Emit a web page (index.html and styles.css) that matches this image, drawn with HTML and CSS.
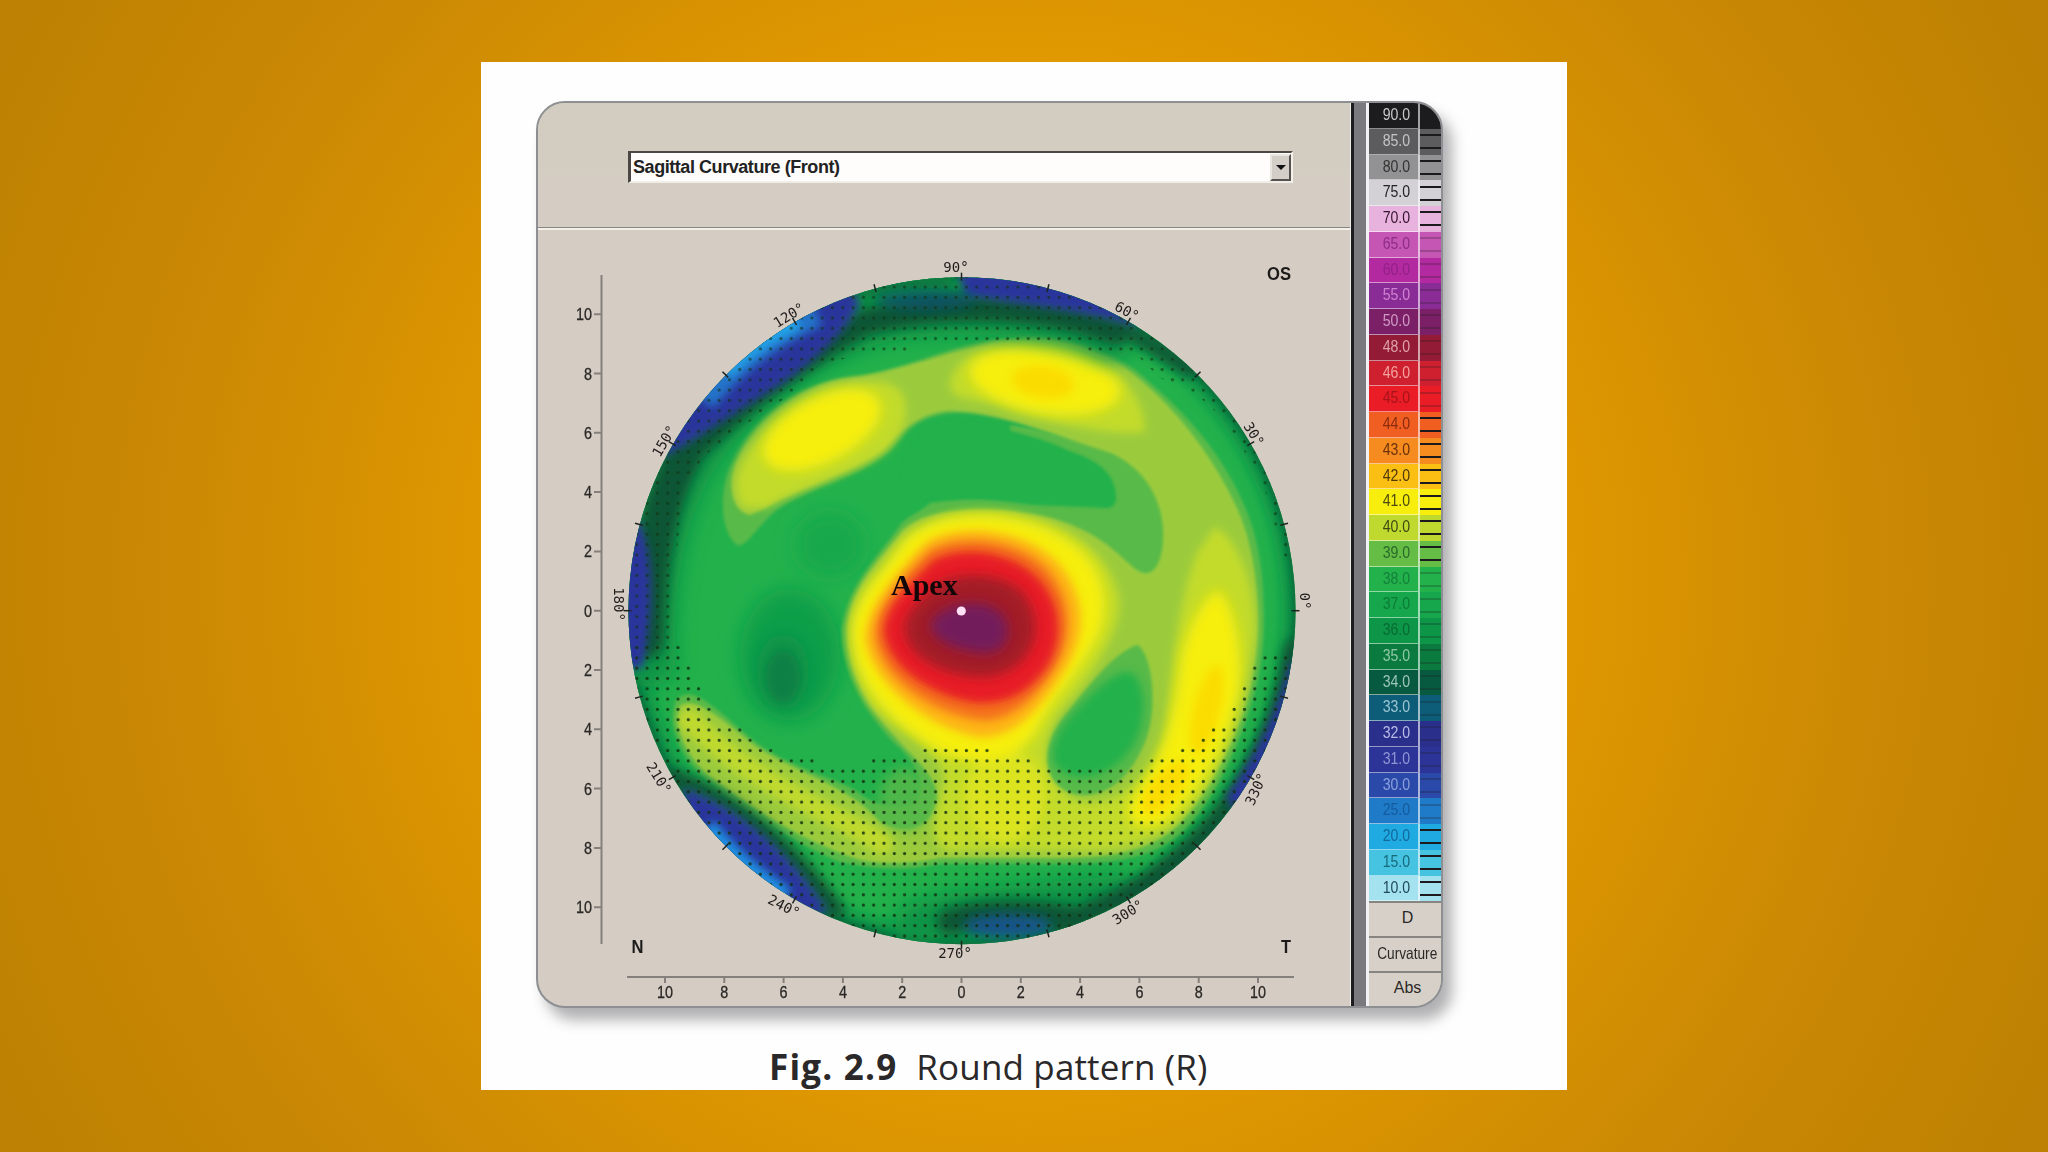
FILE: index.html
```html
<!DOCTYPE html>
<html lang="en">
<head>
  <meta charset="utf-8">
  <title>Fig. 2.9 Round pattern (R)</title>
  <link rel="stylesheet" href="styles.css">
</head>
<body>
  <figure class="figure">
    <div class="panel">
      <div class="main">
        <div class="toolbar">
          <div class="combo">
            <span class="combo-text">Sagittal Curvature (Front)</span>
            <span class="combo-btn"><i class="arrow"></i></span>
          </div>
        </div>
        <svg class="map" viewBox="538 230 812 776" width="812" height="776">
          <defs>
            <clipPath id="eye"><circle cx="962" cy="610.7" r="333.5"/></clipPath>
            <filter id="b1" x="-20%" y="-20%" width="140%" height="140%"><feGaussianBlur stdDeviation="1.5"/></filter>
            <filter id="b4" x="-30%" y="-30%" width="160%" height="160%"><feGaussianBlur stdDeviation="4"/></filter>
            <filter id="b6" x="-40%" y="-40%" width="180%" height="180%"><feGaussianBlur stdDeviation="6"/></filter>
            <filter id="b10" x="-60%" y="-60%" width="220%" height="220%"><feGaussianBlur stdDeviation="10"/></filter>
            <pattern id="grid" patternUnits="userSpaceOnUse" x="683.15" y="724.85" width="10.3" height="10.3">
              <circle cx="5.15" cy="5.15" r="1.6" fill="#12300f"/>
            </pattern>
          </defs>

          <g clip-path="url(#eye)">
            <rect x="620" y="270" width="690" height="690" fill="#23b14c"/>

            <!-- cool spots -->
            <ellipse cx="790" cy="655" rx="50" ry="66" fill="#0c9f4a" filter="url(#b10)"/>
            <ellipse cx="830" cy="545" rx="34" ry="32" fill="#18a84b" filter="url(#b10)"/>
            <ellipse cx="783" cy="672" rx="26" ry="38" fill="#0b9047" filter="url(#b10)"/>
            <ellipse cx="783" cy="677" rx="17" ry="26" fill="#0b8145" filter="url(#b4)"/>

            <!-- 39 D -->
            <path class="l39" filter="url(#b1)" d="M737 545C718 530 720 485 732 462C750 420 790 385 850 376C900 372 950 345 1000 338C1060 332 1110 345 1147 380C1200 425 1232 470 1250 520C1268 570 1268 650 1254 695C1240 745 1215 800 1183 832C1150 862 1100 864 1060 864L940 864C900 872 870 868 840 862C800 846 750 815 707 780C680 757 668 730 675 702C690 680 715 708 753 740C790 768 830 776 855 790C880 812 920 812 920 790C922 770 905 752 893 742C865 712 840 670 842 627C850 580 880 555 900 525C925 495 1010 503 1050 515C1095 528 1110 545 1133 567C1148 580 1158 572 1162 550C1168 510 1150 470 1110 453C1060 435 1000 414 957 413C915 415 905 435 890 450C860 478 800 490 773 513C755 530 745 548 737 545Z"/>
            <path class="l39" filter="url(#b1)" d="M1010 425C1050 430 1100 445 1130 462C1165 490 1168 530 1162 560C1155 580 1145 582 1133 570C1105 545 1080 525 1040 518L905 524L930 503C980 496 1020 500 1080 500L1010 480Z"/>
            <path class="l395" filter="url(#b1)" d="M750 515C728 510 728 475 738 458C760 410 810 382 850 378C900 372 950 350 1000 341C1060 335 1100 345 1137 377C1180 412 1215 460 1238 510C1262 565 1262 640 1250 690C1236 745 1205 795 1178 825C1150 850 1120 857 1060 858L940 858C920 862 890 866 860 860C800 840 750 808 707 774C684 752 674 730 680 706C695 694 725 722 757 747C800 775 850 786 880 822C905 835 930 830 938 800C938 775 905 750 896 738C868 708 845 670 847 627C852 585 880 560 903 530C930 505 1000 506 1050 518C1095 530 1110 547 1133 567C1148 580 1158 572 1162 550C1168 510 1150 470 1110 453C1060 437 1000 412 957 411C920 408 895 438 880 452C840 478 790 492 765 508Z"/>

            <!-- 40 D -->
            <g class="l40" filter="url(#b4)">
              <path d="M745 508C730 492 735 465 758 437C783 398 835 380 882 382C918 388 908 430 887 450C860 472 800 487 767 507Z"/>
              <path d="M950 384C955 350 1000 342 1050 343C1100 346 1147 390 1145 432C1110 436 1040 422 995 404C970 399 950 400 950 384Z"/>
              <path d="M1215 527C1240 540 1256 590 1255 633C1250 690 1225 750 1208 785C1180 825 1150 848 1090 850L950 850C925 845 935 810 945 780C940 745 890 730 870 702C845 660 845 600 880 570C905 525 945 507 1000 512C1070 518 1118 560 1120 605C1118 640 1085 685 1060 712C1040 745 1040 780 1075 800C1120 812 1155 770 1165 733C1170 690 1175 610 1197 553Z"/>
              <path d="M690 720C744 778 824 808 882 843" fill="none" stroke="#bfd92e" stroke-width="22" stroke-linecap="round"/>
            </g>
            <!-- 41 / 42 D -->
            <g class="l41" filter="url(#b6)">
              <ellipse cx="822" cy="430" rx="64" ry="32" transform="rotate(-27 822 430)"/>
              <ellipse cx="1045" cy="382" rx="76" ry="31" transform="rotate(9 1045 382)"/>
              <path d="M1219 590C1236 610 1242 650 1240 683C1232 740 1205 785 1167 820C1140 835 1120 820 1132 800C1160 765 1175 720 1181 660C1188 625 1205 595 1219 590Z"/>
              <path d="M903 543C935 506 1020 510 1064 538C1103 560 1111 600 1100 632C1082 672 1052 697 1037 730C1018 765 963 770 928 744C888 720 852 680 852 630C855 595 882 575 903 543Z"/>
              <ellipse cx="1005" cy="795" rx="40" ry="46" opacity=".5"/>
            </g>
            <g class="l42" filter="url(#b4)">
              <ellipse cx="1043" cy="382" rx="31" ry="16" transform="rotate(8 1043 382)"/>
              <ellipse cx="1207" cy="710" rx="13" ry="45" transform="rotate(14 1207 710)"/>
              <ellipse cx="1165" cy="788" rx="14" ry="32" transform="rotate(40 1165 788)"/>
            </g>

            <!-- troughs between the ring and the cone -->
            <path class="l38" filter="url(#b1)" d="M905 455C920 435 935 422 957 422C985 422 1050 440 1067 450C1085 456 1105 465 1112 480C1118 495 1118 507 1108 508L1033 505C990 499 940 494 915 500L900 490Z"/>
            <path class="l39" filter="url(#b1)" d="M1138 645C1155 660 1157 715 1145 742C1130 780 1105 797 1080 795C1045 790 1038 755 1060 722C1085 690 1115 650 1138 645Z"/>
            <path class="l38" filter="url(#b4)" d="M1130 672C1148 682 1146 720 1135 742C1118 772 1090 782 1068 775C1046 765 1050 745 1066 722C1085 700 1112 670 1130 672Z"/>
            <ellipse class="l39" cx="905" cy="800" rx="26" ry="32" opacity=".8" filter="url(#b6)"/>

            <!-- hot centre, 43 D and up -->
            <path fill="#fdb414" filter="url(#b4)" d="M925 543C960 520 1030 530 1060 565C1085 595 1088 635 1065 670C1040 710 1015 738 980 737C935 730 875 690 865 640C865 605 900 570 925 543Z"/>
            <path fill="#f4711f" filter="url(#b4)" d="M930 550C965 532 1020 540 1048 570C1072 600 1074 635 1055 668C1035 700 1010 722 980 720C935 714 880 680 875 635C875 605 905 575 930 550Z"/>
            <path fill="#e71d25" filter="url(#b4)" d="M932 561C965 543 1015 553 1038 578C1062 603 1064 640 1047 667C1027 695 1005 704 977 703C935 698 888 668 884 632C884 605 910 585 932 561Z"/>
            <path fill="#a21c28" filter="url(#b6)" d="M940 583C965 570 1005 575 1022 592C1040 615 1038 640 1025 657C1005 680 980 680 950 672C920 662 903 645 905 625C908 608 925 595 940 583Z"/>
            <path fill="#731d5c" filter="url(#b6)" d="M932 620C945 603 985 595 1003 615C1014 635 1005 653 985 653C960 652 925 640 932 620Z"/>

            <!-- dark rim -->
            <circle cx="962" cy="610.7" r="335" fill="none" stroke="#0f9548" stroke-width="30" filter="url(#b6)"/>
            <circle cx="962" cy="610.7" r="336" fill="none" stroke="#0a5a36" stroke-width="9" filter="url(#b4)"/>
            <g fill="none" stroke="#0f9347" stroke-linecap="round" filter="url(#b10)">
              <path d="M648 660C645 600 655 510 695 450C735 390 800 340 880 315C950 303 1050 303 1110 333" stroke-width="54"/>
              <path d="M915 925C960 905 1040 905 1120 895" stroke-width="40"/>
            </g>
            <g fill="none" stroke="#0b5535" stroke-linecap="round" filter="url(#b6)">
              <path d="M646 640C648 580 654 510 684 455" stroke-width="36"/>
              <path d="M684 458C735 405 800 358 865 322C940 304 1040 302 1115 332" stroke-width="26"/>
              <path d="M1120 326L1190 370" stroke-width="14"/>
              <path d="M1295 650C1285 720 1245 800 1190 850C1140 895 1110 905 1060 925" stroke-width="22"/>
              <path d="M672 778C725 795 785 840 835 910" stroke-width="18"/>
              <path d="M950 922C980 912 1030 910 1075 920" stroke-width="26"/>
            </g>
            <path d="M868 285C890 276 930 274 958 277L945 288C910 287 880 292 860 300Z" fill="#0b7a3f" filter="url(#b4)"/>
            <g fill="#2b359c" filter="url(#b4)">
              <path d="M660 458C690 444 735 412 778 386C818 358 848 330 860 302L840 280L780 290L660 370Z"/>
              <path d="M958 270L1010 270L1090 285L1142 328C1100 314 1040 306 965 296Z"/>
              <path d="M636 518C654 545 655 610 642 668L615 670L615 510Z"/>
              <path d="M683 788C735 805 790 850 828 912L780 920L690 840Z"/>
              <path d="M1292 658C1280 705 1260 750 1226 798L1250 825L1330 740Z"/>
            </g>
            <ellipse cx="1008" cy="926" rx="44" ry="12" fill="#16538a" filter="url(#b6)"/>
            <ellipse cx="925" cy="300" rx="50" ry="10" fill="#0e4f6e" opacity=".8" filter="url(#b6)"/>
            <g fill="none" filter="url(#b4)">
              <path d="M700 397C735 355 775 328 815 310" stroke="#2273c9" stroke-width="34"/>
              <path d="M722 368C745 345 770 330 795 317" stroke="#22a3e8" stroke-width="24"/>
              <path d="M706 828C725 853 750 875 785 898" stroke="#1f8fe0" stroke-width="22"/>
            </g>

            <!-- extrapolated data -->
            <path fill="url(#grid)" opacity=".85" d="M600 642H683V663H693V683H704V704H714V725H745V735H755V746H776V756H817V767H868V756H920V746H993V756H1034V767H1146V756H1176V746H1198V735H1209V725H1230V704H1240V683H1250V663H1262V652H1320V980H600Z"/>
            <path fill="url(#grid)" opacity=".6" d="M600 642H673L676 560L684 485L705 455L745 425L790 395L820 365L870 352H910V343H1085V353H1135L1160 378L1195 393L1225 420L1262 480L1285 560L1320 560V250H600Z"/>
          </g>

          <circle class="apex-dot" cx="961.3" cy="611" r="4.6"/>
          <text class="apex" x="891" y="595">Apex</text>

          <g id="axes" class="axes">
            <path d="M601.5 275V944M627 977H1294"/>
          </g>
          <g id="degrees" class="degrees"></g>

          <text class="side" x="1267" y="280" textLength="24" lengthAdjust="spacingAndGlyphs">OS</text>
          <text class="side" x="631.500" y="953" textLength="12" lengthAdjust="spacingAndGlyphs">N</text>
          <text class="side" x="1281" y="953" textLength="10" lengthAdjust="spacingAndGlyphs">T</text>
        </svg>
      </div>
      <div class="splitter"></div>
      <div class="scale">
        <div id="rows" class="rows"></div>
        <div class="unit">D</div>
        <div class="unit"><span class="narrow">Curvature</span></div>
        <div class="unit">Abs</div>
      </div>
    </div>
    <figcaption class="caption"><b>Fig. 2.9</b><span>Round pattern (R)</span></figcaption>
  </figure>
  <script src="script.js"></script>
</body>
</html>
```

FILE: styles.css
```css
* { box-sizing: border-box; }
body { margin: 0; height: 1152px; overflow: hidden; padding-top: 62px; font-family: "Liberation Sans", Arial, sans-serif; background: radial-gradient(circle at 50% 50%, #e89f00 0, #e29a00 42%, #cb8904 72%, #bd8002 100%); }

.figure { width: 1086px; height: 1028px; margin: 0 auto; padding: 39px 0 0 55px; background: #fefefe; }
.panel { display: flex; width: 907px; height: 907px; border: 2px solid #8d8f92; border-radius: 29px; overflow: hidden; background: #d5cdc4; box-shadow: 9px 12px 14px rgba(60,60,66,.4); }
.main { width: 813px; border-right: 1px solid #f1ede8; }

.toolbar { height: 127px; padding: 48px 0 0 90px; border-bottom: 2px solid #f3efea; background: linear-gradient(#d2cdc0 40%, #d5cdc4 70%); box-shadow: inset 0 -1px #8b8580; }
.combo { display: flex; width: 665px; height: 32px; padding: 1px 0 1px 2px; justify-content: space-between; background: #fefdfc; border-top: 2px solid #4b4744; border-left: 3px solid #4b4744; border-right: 2px solid #f4f1ea; border-bottom: 2px solid #f0ede6; }
.combo-text { font-size: 18px; font-weight: bold; line-height: 27px; letter-spacing: -.44px; color: #222; }
.combo-btn { width: 21px; height: 27px; background: #d3cfc8; border: 2px solid #55514e; border-top-color: #e9e6e0; border-left-color: #e9e6e0; display: flex; align-items: center; justify-content: center; }
.arrow { border: 5px solid transparent; border-top-color: #111; border-bottom: 0; }

.map { display: block; }
.l38 { fill: #23b14c; }
.l39 { fill: #58ba48; }
.l395 { fill: #9bcb3c; }
.l40 { fill: #c3db2b; }
.l41 { fill: #f6ee10; }
.l42 { fill: #fbdc05; }
.apex { font: bold 30px "Liberation Serif", "Times New Roman", serif; fill: #120608; }
.apex-dot { fill: #ffe0f6; }
.axes path { fill: none; stroke: #85807b; stroke-width: 2; }
.axes text { font-size: 16.5px; fill: #2b2826; stroke: #2b2826; stroke-width: .3; }
.degrees text { font: 14px "DejaVu Sans Mono", monospace; fill: #1f1b1a; text-anchor: middle; }
.degrees line { stroke: #1d2420; stroke-width: 1.5; }
.side { font-size: 18px; font-weight: bold; fill: #1d1b1a; }

.splitter { width: 15px; border-left: 3px solid #1c1c1e; background: #7a797d; }
.scale { flex: 1; border-left: 3px solid #f2f2f4; }
.rows { height: 798px; overflow: hidden; }
.row { display: flex; height: 25.75px; }
.value { width: 51px; padding-right: 8px; text-align: right; font-size: 17px; line-height: 24px; border-right: 2px solid rgba(255,255,255,.6); border-bottom: 1px solid rgba(255,255,255,.5); }
.value span, .narrow { display: inline-block; transform: scaleX(.83); transform-origin: right; }
.steps { flex: 1; display: flex; flex-direction: column; justify-content: space-around; }
.steps i { height: 2px; background: #1c1a1c; }
.deep .steps i { opacity: .25; }
.unit { height: 35px; line-height: 30px; font-size: 16px; text-align: center; padding-left: 5px; border-top: 2px solid #88847f; background: #d6d0c8; color: #2b2826; white-space: nowrap; }
.narrow { transform-origin: center; font-size: 16.5px; margin: 0 -6px; }

.caption { display: flex; gap: 19px; margin: 34px 0 0 233px; font: 35px/50px "Open Sans", "Noto Sans", sans-serif; color: #2a2829; white-space: nowrap; }
.caption b { letter-spacing: 1.2px; }
.caption span { letter-spacing: .15px; }
```

FILE: script.js
```js
const NS = 'http://www.w3.org/2000/svg';
const cx = 961.5, cy = 610.7, unit = 29.65;

function add(parent, tag, attrs, text) {
  const el = document.createElementNS(NS, tag);
  for (const k in attrs) el.setAttribute(k, attrs[k]);
  if (text !== undefined) el.textContent = text;
  parent.appendChild(el);
}

// mm axes
const axes = document.getElementById('axes');
for (let v = -10; v <= 10; v += 2) {
  const x = cx + v * unit, y = cy + v * unit, n = Math.abs(v);
  const w = n === 10 ? 16 : 8;
  add(axes, 'path', { d: `M594 ${y}H601M${x} 977V983` });
  add(axes, 'text', { x: 592 - w, y: y + 6, textLength: w, lengthAdjust: 'spacingAndGlyphs' }, n);
  add(axes, 'text', { x: x - w / 2, y: 998, textLength: w, lengthAdjust: 'spacingAndGlyphs' }, n);
}

// meridian ticks and labels: [degrees, x, y, rotation]
const degrees = document.getElementById('degrees');
for (let a = 0; a < 360; a += 15) {
  const c = Math.cos(a * Math.PI / 180), s = Math.sin(a * Math.PI / 180);
  add(degrees, 'line', { x1: cx + 330 * c, y1: cy - 330 * s, x2: cx + 338 * c, y2: cy - 338 * s });
}
[[90, 956, 267, 0], [60, 1127, 311, 28], [30, 1254, 434, 58], [0, 1305, 601, 90],
 [330, 1256, 789, -65], [300, 1128, 912, -32], [270, 955, 953, 0], [240, 784, 906, 27],
 [210, 659, 778, 58], [180, 619, 604, 90], [150, 664, 441, -60], [120, 789, 315, -32]
].forEach(([d, x, y, r]) => {
  add(degrees, 'text', { x: x, y: y + 5, transform: `rotate(${r} ${x} ${y})` }, d + '°');
});

// dioptre scale: [value, cell colour, text colour, faint steps]
const scale = [
  ['90.0', '#1c1b1d', '#c9c9cb', 0], ['85.0', '#5c5b5d', '#c4c4c6', 0], ['80.0', '#929193', '#333', 0],
  ['75.0', '#d3d1d6', '#222', 0], ['70.0', '#e8b2de', '#37152f', 0], ['65.0', '#c556b4', '#8c2d86', 1],
  ['60.0', '#b32aa0', '#912187', 1], ['55.0', '#8a2c96', '#cf83d2', 1], ['50.0', '#7b1f66', '#d09ac4', 1],
  ['48.0', '#941b35', '#dfa3a8', 1], ['46.0', '#cf2030', '#f3a3a0', 1], ['45.0', '#ea1c26', '#a5141b', 1],
  ['44.0', '#f15e22', '#8a2b0e', 0], ['43.0', '#f68b1f', '#6a320c', 0], ['42.0', '#fbbf14', '#4d3809', 0],
  ['41.0', '#f7ee0e', '#4c4a0c', 0], ['40.0', '#bfd92f', '#3c4a12', 0], ['39.0', '#65bd45', '#2a6a2c', 0],
  ['38.0', '#23b14c', '#14803a', 1], ['37.0', '#16a64b', '#0c7a38', 1], ['36.0', '#0d9647', '#086a33', 1],
  ['35.0', '#0b7a3e', '#8fc9a5', 1], ['34.0', '#07593f', '#9cc6b8', 1], ['33.0', '#0d5c78', '#9cc6d2', 1],
  ['32.0', '#2b2f8c', '#b9bce6', 1], ['31.0', '#2d3497', '#8f96d4', 1], ['30.0', '#2a49a9', '#8ba0dc', 1],
  ['25.0', '#1f7bc8', '#145a9d', 1], ['20.0', '#1fabe2', '#13689c', 0], ['15.0', '#45c3e0', '#17697c', 0],
  ['10.0', '#a5e2f0', '#1f4a56', 0]
];
document.getElementById('rows').innerHTML = scale.map(([v, bg, fg, deep]) =>
  `<div class="row${deep ? ' deep' : ''}" style="background:${bg}">
    <div class="value" style="color:${fg}"><span>${v}</span></div>
    <div class="steps"><i></i><i></i></div>
  </div>`).join('');
```
